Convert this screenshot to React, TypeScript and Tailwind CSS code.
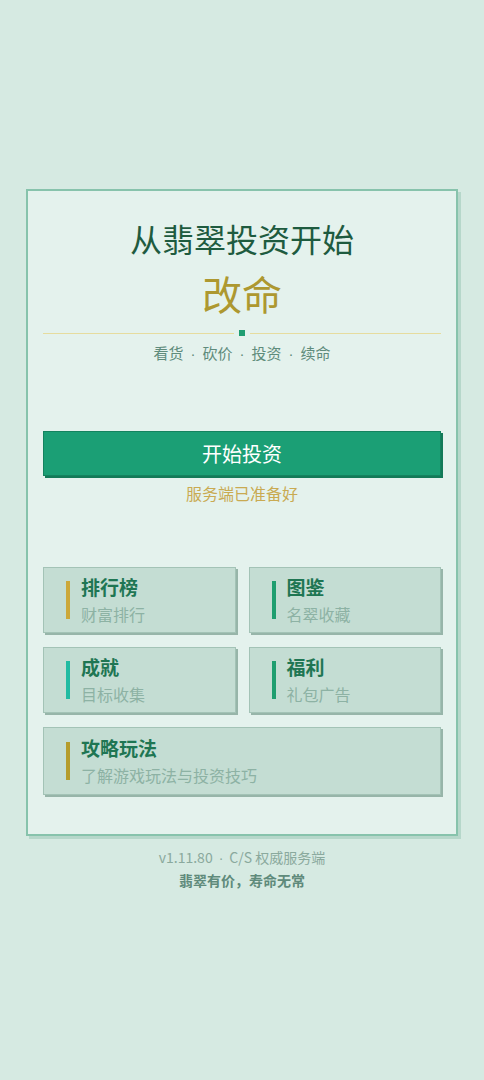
import React from "react";

const FONT = { fontFamily: '"Noto Sans CJK SC", "Noto Sans", sans-serif' };

function Tile({ title, sub, bar, wide }: { title: string; sub: string; bar: string; wide?: boolean }) {
  return (
    <div
      className={`flex items-center bg-[#c4ddd3] border border-[#a3c3b6] shadow-[2px_2px_0_#97b5a9] pl-[22px] ${wide ? "col-span-2 h-[68px]" : "h-[66px]"}`}
    >
      <div className={`w-[4px] h-[38px] ${bar}`} />
      <div className="ml-[11px] flex flex-col">
        <div className="text-[19px] leading-[24px] font-semibold text-[#1f7653]">{title}</div>
        <div className="mt-[4px] text-[16px] leading-[22px] text-[#8db2a4]">{sub}</div>
      </div>
    </div>
  );
}

const Dot = () => <span className="font-['Liberation_Sans'] px-[7px]">·</span>;
const SmallDot = () => <span className="font-['Liberation_Sans'] px-[6px]">·</span>;

export default function App() {
  return (
    <div className="min-h-screen bg-[#d6eae2] flex flex-col items-center justify-center" style={FONT}>
      <div className="w-[432px] border-2 border-[#87c3ac] bg-[#e4f2ed] shadow-[3px_3px_0_#b6d7ca] px-[15px] pt-[27px] pb-[39px]">
        <div className="text-center text-[32px] leading-[40px] text-[#1e5b3f]">从翡翠投资开始</div>
        <div className="mt-[9px] text-center text-[40px] leading-[52px] text-[#ad9830]">改命</div>
        <div className="mt-[11px] flex items-center">
          <div className="flex-1 h-px bg-[#e6dc9e]" />
          <div className="mx-[5px] w-[6px] h-[6px] bg-[#1f9e72]" />
          <div className="flex-1 h-px bg-[#e6dc9e]" />
        </div>
        <div className="mt-[6px] text-center text-[15px] leading-[22px] text-[#5f8c7c]">
          看货<Dot />砍价<Dot />投资<Dot />续命
        </div>
        <button className="mt-[66px] w-full h-[45px] bg-[#1b9f75] border border-[#14835f] shadow-[2px_2px_0_#137a58] text-white text-[20px]">
          开始投资
        </button>
        <div className="mt-[6px] text-center text-[16px] leading-[22px] text-[#c9aa52]">服务端已准备好</div>
        <div className="mt-[63px] grid grid-cols-2 gap-x-[13px] gap-y-[14px]">
          <Tile title="排行榜" sub="财富排行" bar="bg-[#cca83a]" />
          <Tile title="图鉴" sub="名翠收藏" bar="bg-[#1f9e6f]" />
          <Tile title="成就" sub="目标收集" bar="bg-[#22bba2]" />
          <Tile title="福利" sub="礼包广告" bar="bg-[#1f9e6f]" />
          <Tile title="攻略玩法" sub="了解游戏玩法与投资技巧" bar="bg-[#b59c2c]" wide />
        </div>
      </div>
      <div className="mt-[10px] text-center text-[14px] leading-[22px] text-[#8aa99d]">
        v1.11.80<SmallDot />C/S 权威服务端
      </div>
      <div className="text-center text-[14px] leading-[22px] font-semibold text-[#5f8a7b]">翡翠有价，寿命无常</div>
    </div>
  );
}
